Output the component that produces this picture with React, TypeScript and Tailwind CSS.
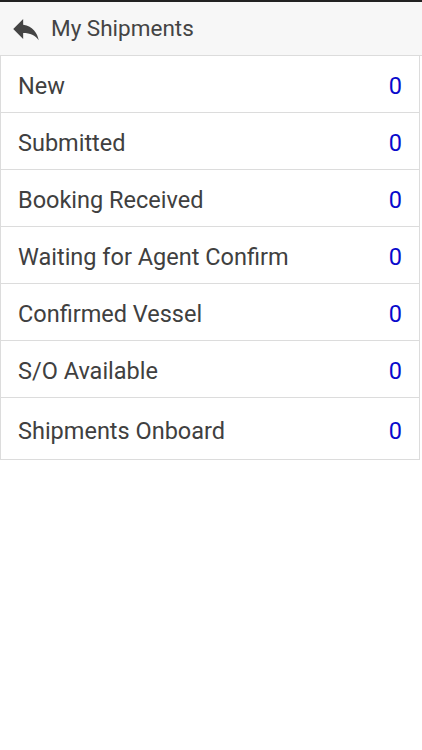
const rows = [
  "New",
  "Submitted",
  "Booking Received",
  "Waiting for Agent Confirm",
  "Confirmed Vessel",
  "S/O Available",
  "Shipments Onboard",
];

export default function App() {
  return (
    <div
      className="w-[422px] h-[750px] bg-white overflow-hidden"
      style={{ fontFamily: "Roboto, 'Liberation Sans', sans-serif" }}
    >
      {/* Header */}
      <div className="h-[56px] bg-[#f7f7f7] border-t-2 border-[#222] border-b border-b-[#dcdcdc] flex items-center">
        <svg viewBox="0 0 24 24" className="w-[34px] h-[34px] ml-[9px] fill-[#444]">
          <path d="M10 9V5l-7 7 7 7v-4.1c5 0 8.5 1.6 11 5.1-1-5-4-10-11-11z" />
        </svg>
        <span className="ml-[8px] text-[22.5px] text-[#444]">My Shipments</span>
      </div>

      {/* List */}
      <div className="w-[420px] border-r border-l border-b border-[#dcdcdc]">
        {rows.map((r, i) => (
          <div
            key={r}
            className={`flex items-center justify-between pl-[17px] pr-[17px] pt-[6px] ${
              i === rows.length - 1 ? "h-[61px]" : "h-[57px] border-b border-[#dcdcdc]"
            }`}
          >
            <span className="text-[23.5px] text-[#404040]">{r}</span>
            <span className="text-[23.5px] text-[#0a0acc]">0</span>
          </div>
        ))}
      </div>
    </div>
  );
}
